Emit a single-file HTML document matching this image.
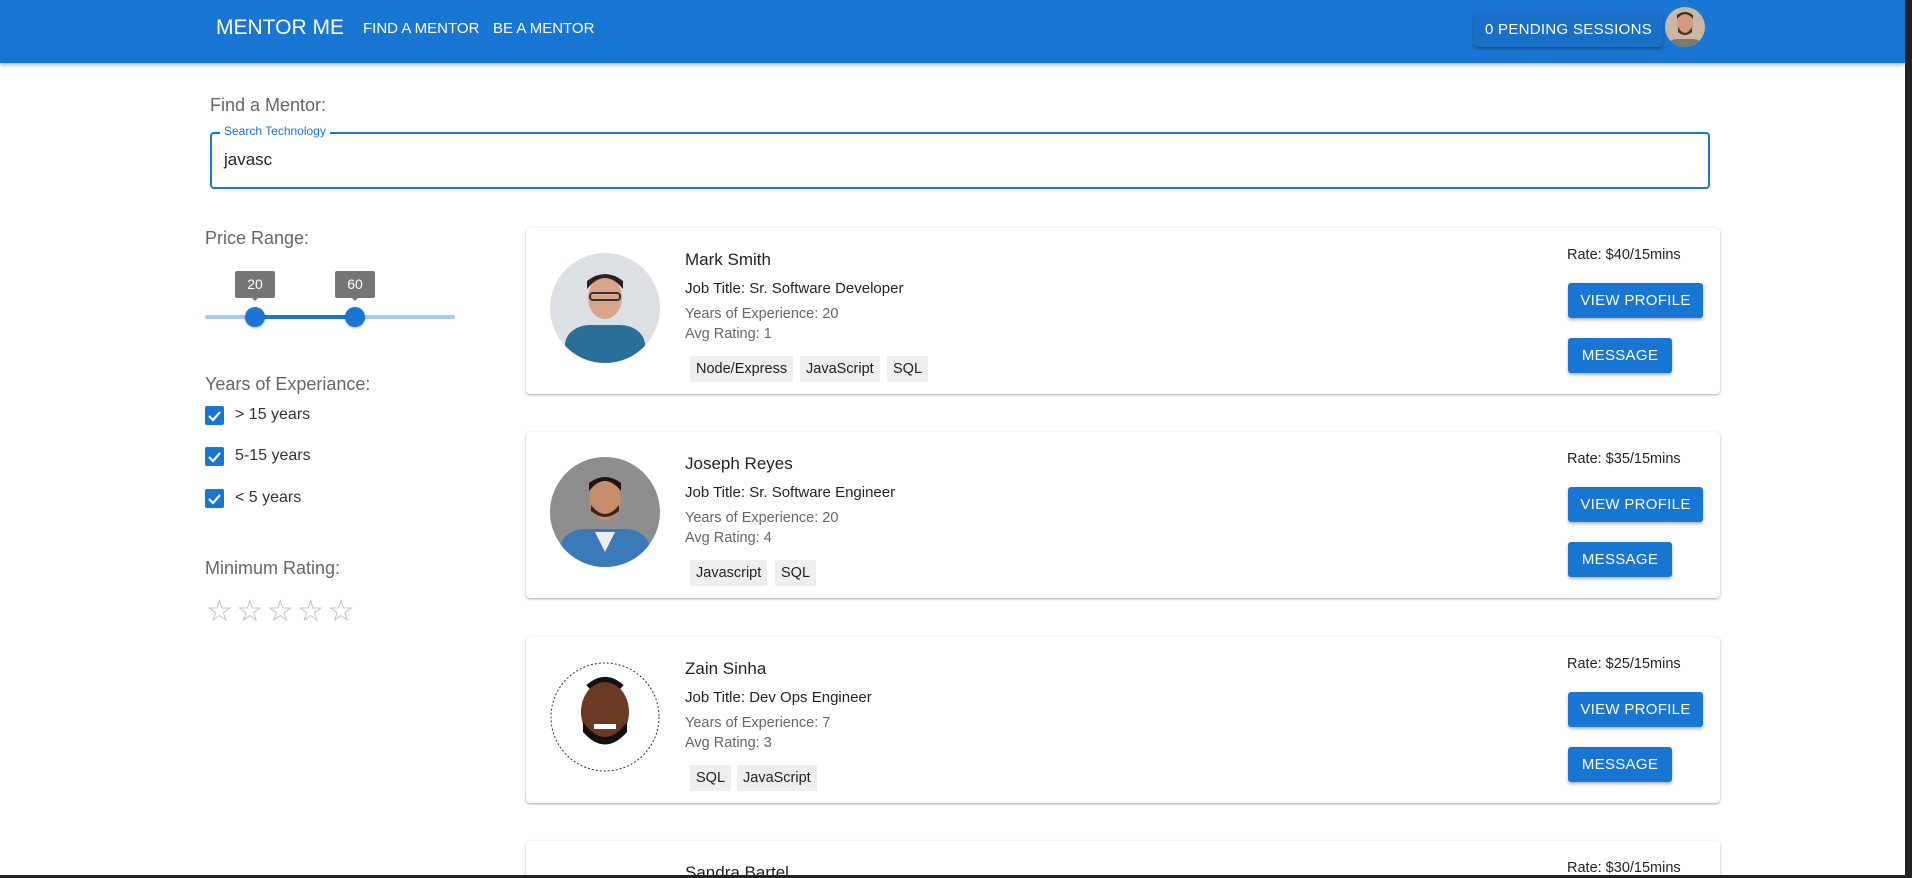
<!DOCTYPE html>
<html style="overflow:hidden;height:878px"><head><meta charset="utf-8"><style>
*{margin:0;padding:0;box-sizing:border-box}
html,body{width:1912px;height:878px;overflow:hidden}
body{background:#fff;font-family:"Liberation Sans",Arial,sans-serif;position:relative;color:rgba(0,0,0,.87)}
#w{position:absolute;left:0;top:0;width:1912px;height:878px;overflow:hidden}
.a{position:absolute;white-space:nowrap}
.hdr{left:0;top:0;width:1905px;height:63px;background:#1976d2;box-shadow:0 2px 4px rgba(0,0,0,.3)}
.nav{color:#fff;font-size:15px;top:20px}
.pend{left:1474px;top:12px;width:189px;height:35px;background:#1a6fc6;border-radius:4px;box-shadow:0 2px 3px rgba(0,0,0,.3);color:#fff;font-size:15px;text-align:center;line-height:35px;letter-spacing:.3px}
.lbl{color:#666;font-size:18px}
.card{left:526px;width:1194px;height:166px;background:#fff;border-radius:4px;box-shadow:0 1px 3px rgba(0,0,0,.25),0 1px 1px rgba(0,0,0,.12)}
.card .nm{left:159px;top:22px;font-size:17px}
.card .jt{left:159px;top:52px;font-size:15px}
.card .ye{left:159px;top:78px;font-size:14.5px;color:#666}
.card .av{left:159px;top:98px;font-size:14.5px;color:#666}
.chip{position:absolute;top:128px;height:26px;line-height:26px;background:#eee;font-size:14.5px;padding:0 6px}
.rate{left:1041px;top:19px;font-size:14.5px}
.btn{position:absolute;left:1042px;height:35px;line-height:35px;background:#1976d2;color:#fff;font-size:15px;border-radius:3px;box-shadow:0 2px 3px rgba(0,0,0,.3);text-align:center;letter-spacing:.3px}
.ph{position:absolute;left:24px;top:25px;width:110px;height:110px;border-radius:50%;overflow:hidden}
.cb{position:absolute;left:205px;width:19px;height:19px;background:#1976d2;border-radius:2px}
.cbt{left:235px;font-size:16px;color:#333}
</style></head><body><div id="w">
<div class="a hdr"></div>
<div class="a" style="left:216px;top:16px;color:#fff;font-size:21px">MENTOR ME</div>
<div class="a nav" style="left:363px">FIND A MENTOR</div>
<div class="a nav" style="left:493px">BE A MENTOR</div>
<div class="a pend">0 PENDING SESSIONS</div>
<svg class="a" style="left:1665px;top:7px" width="40" height="40"><clipPath id="c0"><circle cx="20" cy="20" r="20"/></clipPath><g clip-path="url(#c0)"><rect width="40" height="40" fill="#c9b8a8"/><ellipse cx="20" cy="17" rx="8" ry="10" fill="#d49a7c"/><path d="M12 12q8-10 16 0v-4q-8-6-16 0z" fill="#3a2a20"/><path d="M13 20q7 12 14 0v5q-7 6-14 0z" fill="#4a3428"/><rect x="4" y="32" width="32" height="10" rx="8" fill="#7a7a68"/></g></svg>

<div class="a lbl" style="left:210px;top:95px">Find a Mentor:</div>
<div class="a" style="left:210px;top:132px;width:1500px;height:57px;border:2px solid #1976d2;border-radius:4px"></div>
<div class="a" style="left:220px;top:124px;background:#fff;padding:0 4px;color:#1976d2;font-size:12px">Search Technology</div>
<div class="a" style="left:224px;top:150px;font-size:17px">javasc</div>

<div class="a lbl" style="left:205px;top:228px">Price Range:</div>
<div class="a" style="left:205px;top:315px;width:250px;height:4px;background:#a9c9ec;border-radius:2px"></div>
<div class="a" style="left:255px;top:315px;width:100px;height:4px;background:#1976d2"></div>
<div class="a" style="left:245px;top:307px;width:20px;height:20px;border-radius:50%;background:#1976d2;box-shadow:0 1px 2px rgba(0,0,0,.3)"></div>
<div class="a" style="left:345px;top:307px;width:20px;height:20px;border-radius:50%;background:#1976d2;box-shadow:0 1px 2px rgba(0,0,0,.3)"></div>
<div class="a" style="left:235px;top:271px;width:40px;height:27px;background:#757575;border-radius:2px;color:#fff;font-size:14px;text-align:center;line-height:27px">20</div>
<div class="a" style="left:250px;top:296px;border:5px solid transparent;border-top-color:#757575"></div>
<div class="a" style="left:335px;top:271px;width:40px;height:27px;background:#757575;border-radius:2px;color:#fff;font-size:14px;text-align:center;line-height:27px">60</div>
<div class="a" style="left:350px;top:296px;border:5px solid transparent;border-top-color:#757575"></div>

<div class="a lbl" style="left:205px;top:374px">Years of Experiance:</div>
<div class="cb" style="top:406px"></div><div class="a cbt" style="top:406px">&gt; 15 years</div>
<div class="cb" style="top:447px"></div><div class="a cbt" style="top:447px">5-15 years</div>
<div class="cb" style="top:489px"></div><div class="a cbt" style="top:489px">&lt; 5 years</div>
<svg class="a" style="left:205px;top:406px" width="19" height="102"><g fill="none" stroke="#fff" stroke-width="2.2"><path d="M4 10l4 4 7-8"/><path d="M4 51l4 4 7-8"/><path d="M4 93l4 4 7-8"/></g></svg>

<div class="a lbl" style="left:205px;top:558px">Minimum Rating:</div>
<div class="a" style="left:206px;top:594px;font-size:30px;color:#bbb;letter-spacing:3.5px">☆☆☆☆☆</div>

<div class="a card" style="top:228px">
<svg class="ph" viewBox="0 0 110 110"><rect width="110" height="110" fill="#dcdfe3"/><rect x="15" y="72" width="80" height="40" rx="25" fill="#2a6e9a"/><ellipse cx="55" cy="45" rx="17" ry="21" fill="#d9a58a"/><path d="M37 36q18-22 36 0v-8q-18-14-36 0z" fill="#2b2220"/><rect x="40" y="40" width="30" height="7" rx="3" fill="none" stroke="#333" stroke-width="2"/></svg>
<div class="a nm">Mark Smith</div><div class="a jt">Job Title: Sr. Software Developer</div><div class="a ye">Years of Experience: 20</div><div class="a av">Avg Rating: 1</div>
<div class="chip" style="left:164px">Node/Express</div><div class="chip" style="left:274px">JavaScript</div><div class="chip" style="left:361px">SQL</div>
<div class="a rate">Rate: $40/15mins</div>
<div class="btn" style="top:55px;width:135px">VIEW PROFILE</div><div class="btn" style="top:110px;width:104px">MESSAGE</div>
</div>

<div class="a card" style="top:432px">
<svg class="ph" viewBox="0 0 110 110"><rect width="110" height="110" fill="#8e8e8e"/><rect x="10" y="72" width="90" height="40" rx="25" fill="#3b78b8"/><path d="M45 75l10 20 10-20z" fill="#eee"/><ellipse cx="55" cy="42" rx="16" ry="21" fill="#c68c6c"/><path d="M39 34q16-20 32 0v-8q-16-12-32 0z" fill="#1e1410"/><path d="M41 48q14 18 28 0v6q-14 12-28 0z" fill="#3a2218"/></svg>
<div class="a nm">Joseph Reyes</div><div class="a jt">Job Title: Sr. Software Engineer</div><div class="a ye">Years of Experience: 20</div><div class="a av">Avg Rating: 4</div>
<div class="chip" style="left:164px">Javascript</div><div class="chip" style="left:249px">SQL</div>
<div class="a rate">Rate: $35/15mins</div>
<div class="btn" style="top:55px;width:135px">VIEW PROFILE</div><div class="btn" style="top:110px;width:104px">MESSAGE</div>
</div>

<div class="a card" style="top:637px">
<svg class="ph" viewBox="0 0 110 110"><rect width="110" height="110" fill="#fff"/><circle cx="55" cy="55" r="54" fill="none" stroke="#333" stroke-dasharray="2 2"/><ellipse cx="55" cy="50" rx="24" ry="30" fill="#6b3a22"/><path d="M33 60q22 30 44 0v10q-22 25-44 0z" fill="#111"/><path d="M38 25q17-15 34 0" stroke="#111" stroke-width="5" fill="none"/><rect x="44" y="62" width="22" height="5" fill="#fff"/></svg>
<div class="a nm">Zain Sinha</div><div class="a jt">Job Title: Dev Ops Engineer</div><div class="a ye">Years of Experience: 7</div><div class="a av">Avg Rating: 3</div>
<div class="chip" style="left:164px">SQL</div><div class="chip" style="left:211px">JavaScript</div>
<div class="a rate">Rate: $25/15mins</div>
<div class="btn" style="top:55px;width:135px">VIEW PROFILE</div><div class="btn" style="top:110px;width:104px">MESSAGE</div>
</div>

<div class="a card" style="top:841px;height:37px">
<div class="a nm">Sandra Bartel</div>
<div class="a rate">Rate: $30/15mins</div>
</div>
<div class="a" style="right:0;top:0;width:7px;height:878px;background:#222"></div>
<div class="a" style="left:0;top:875px;width:1912px;height:3px;background:#222"></div>
</div></body></html>
